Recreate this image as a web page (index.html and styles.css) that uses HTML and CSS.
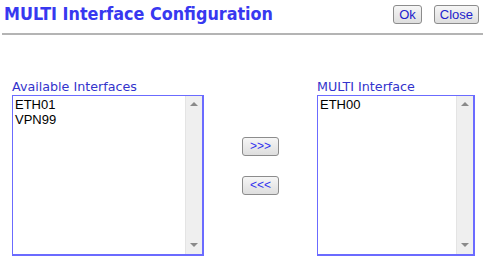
FILE: index.html
```html
<!DOCTYPE html>
<html lang="en">
<head>
    <meta charset="UTF-8">
    <title>MULTI Interface Configuration</title>
    <link rel="stylesheet" href="styles.css">
</head>
<body>
    <div class="header">
        <div class="title">MULTI Interface Configuration</div>
        <div class="actions">
            <button class="btn">Ok</button>
            <button class="btn">Close</button>
        </div>
    </div>
    <div class="panes">
        <div class="pane pane-left">
            <div class="pane-label">Available Interfaces</div>
            <div class="listbox">
                <div class="list-items">
                    <div class="item">ETH01</div>
                    <div class="item">VPN99</div>
                </div>
                <div class="scroll"><span class="arrow up"></span><span class="arrow down"></span></div>
            </div>
        </div>
        <div class="movers">
            <button class="btn mover">&gt;&gt;&gt;</button>
            <button class="btn mover">&lt;&lt;&lt;</button>
        </div>
        <div class="pane pane-right">
            <div class="pane-label">MULTI Interface</div>
            <div class="listbox">
                <div class="list-items">
                    <div class="item">ETH00</div>
                </div>
                <div class="scroll"><span class="arrow up"></span><span class="arrow down"></span></div>
            </div>
        </div>
    </div>
</body>
</html>
```
FILE: styles.css
```css
body { margin: 0; background: #fff; font-family: "Liberation Sans", Arial, sans-serif; }
.header { display: flex; justify-content: space-between; align-items: flex-start; height: 33px; border-bottom: 2px solid #b4b4b4; margin: 0 1px 0 2px; padding: 0 4px 0 2px; }
.title { font-family: "DejaVu Sans Condensed", "DejaVu Sans", sans-serif; font-weight: bold; font-size: 17.8px; color: #3838f0; margin-top: 3px; }
.actions { display: flex; gap: 12px; margin-top: 5px; }
.btn { font-family: "Liberation Sans", Arial, sans-serif; font-size: 13px; color: #2222cc; background: linear-gradient(#f6f6f6, #dedede); border: 1px solid #8c8c8c; border-radius: 3px; height: 19px; padding: 0 5px; line-height: 15px; }
.panes { display: flex; padding: 44px 0 0 12px; }
.pane-label { font-family: "DejaVu Sans", sans-serif; font-size: 12.7px; color: #3333cc; height: 16px; line-height: 16px; }
.pane-left .listbox { width: 189px; }
.pane-right .listbox { width: 155px; }
.listbox { display: flex; height: 158px; border: 2px solid #6b6bff; border-width: 1px 2px 2px 1px; background: #fff; }
.list-items { flex: 1; padding: 1px 2px; font-size: 13px; line-height: 15px; color: #000; }
.scroll { width: 16px; background: #efefef; border-left: 1px solid #e4e4e4; display: flex; flex-direction: column; justify-content: space-between; align-items: center; padding: 6px 0 7px; }
.arrow { width: 0; height: 0; border-left: 4px solid transparent; border-right: 4px solid transparent; }
.arrow.up { border-bottom: 4px solid #8a8a8a; }
.arrow.down { border-top: 4px solid #8a8a8a; }
.movers { width: 113px; display: flex; flex-direction: column; align-items: center; gap: 19px; padding-top: 58px; }
.mover { width: 37px; height: 19px; font-size: 12px; color: #3333ee; }
.mover + .mover { margin-top: 1px; }
```
